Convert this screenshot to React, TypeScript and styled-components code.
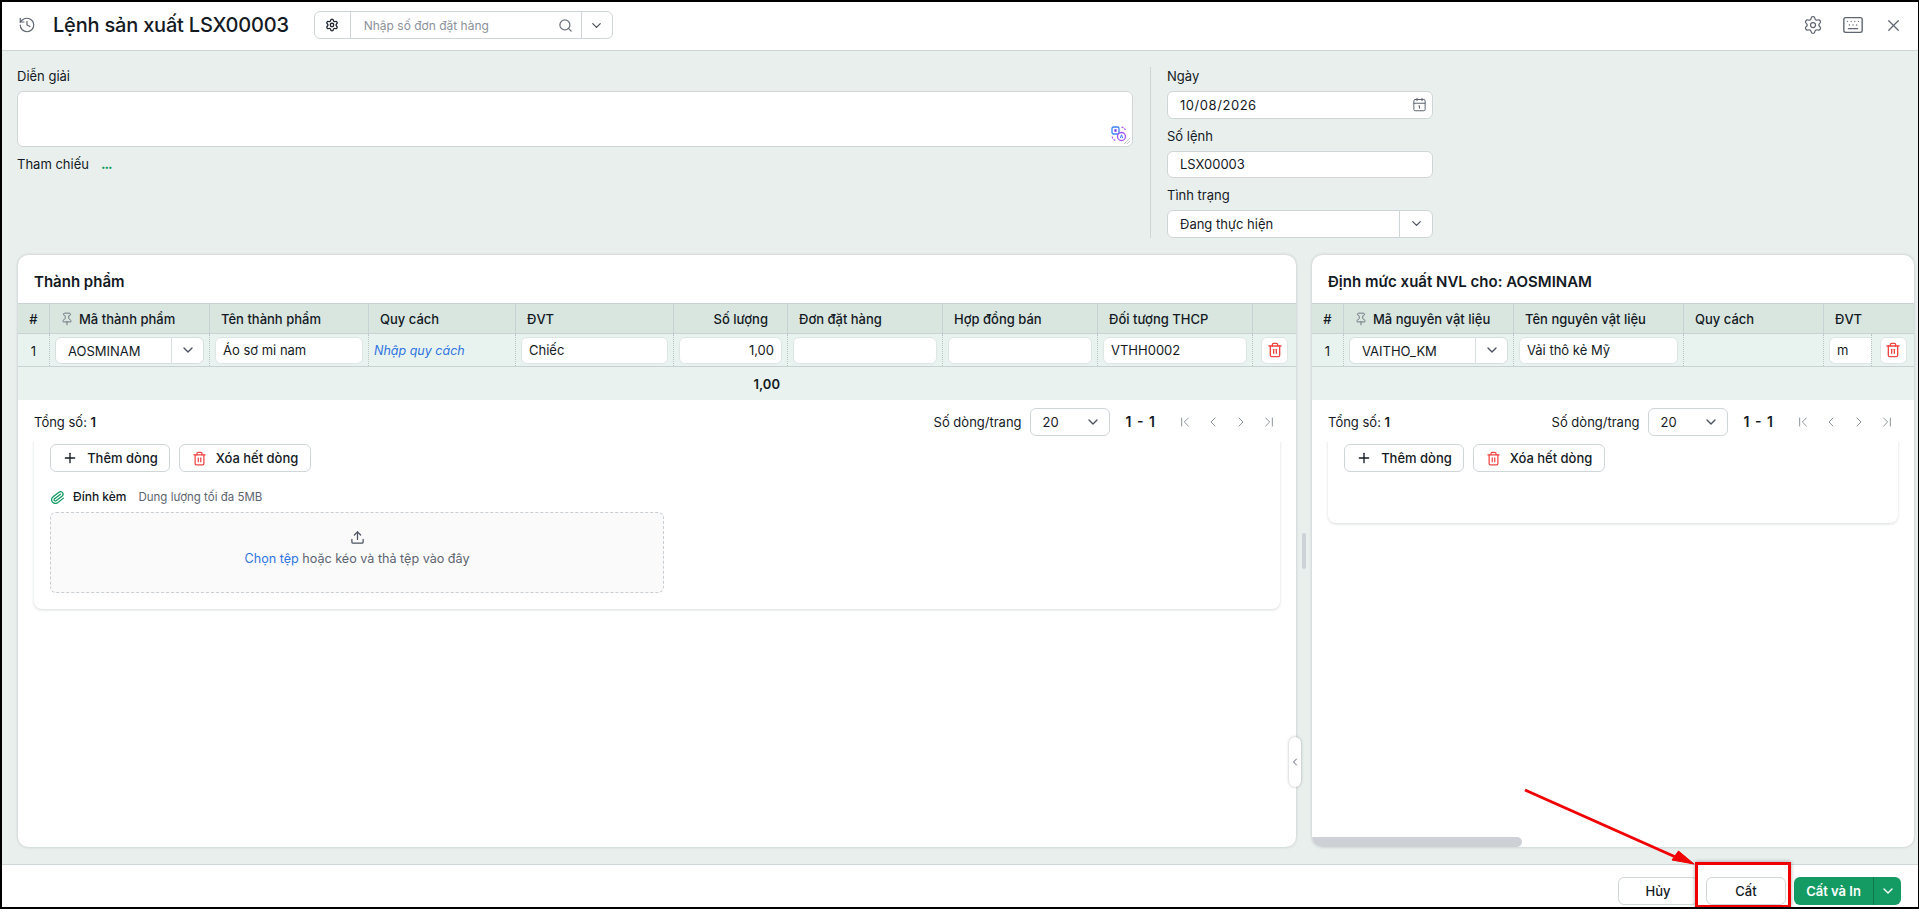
import * as React from 'react'
import styled, { createGlobalStyle } from 'styled-components'
import {
  Calendar1,
  ChevronDown,
  ChevronFirst,
  ChevronLast,
  ChevronLeft,
  ChevronRight,
  History,
  Keyboard,
  Paperclip,
  Pin,
  Plus,
  Search,
  Settings,
  Trash2,
  Upload,
  X,
} from 'lucide-react'

const GlobalStyle = createGlobalStyle`
  html, body {
    margin: 0;
    padding: 0;
    background: #000;
  }
  * {
    box-sizing: border-box;
  }
  body {
    font-family: Inter, 'Noto Sans', sans-serif;
    font-size: 13px;
    color: #141a24;
  }
`

const line = '#d0d5d8'
const tableLine = '#c9d2d2'
const muted = '#5d6470'

const Frame = styled.div`
  position: relative;
  width: 1919px;
  height: 909px;
  border-style: solid;
  border-color: #000;
  border-width: 2px 1px 2px 2px;
  display: flex;
  flex-direction: column;
  background: #e9efed;
  overflow: hidden;
`

const Header = styled.header`
  height: 49px;
  flex: none;
  display: flex;
  align-items: center;
  padding: 0 5px 2px 16px;
  background: #fff;
  border-bottom: 1px solid ${line};
`

const HistoryIcon = styled(History)`
  color: #5f6672;
  margin-right: 17px;
  flex: none;
`

const Title = styled.h1`
  margin: 0 25px 0 0;
  font-size: 20px;
  line-height: 28px;
  font-weight: 500;
  letter-spacing: -0.2px;
  white-space: nowrap;
`

const SearchGroup = styled.div`
  display: flex;
  width: 299px;
  height: 28px;
  background: #fff;
  border: 1px solid ${line};
  border-radius: 6px;
`

const SearchGear = styled.div`
  width: 36px;
  display: flex;
  align-items: center;
  justify-content: center;
  border-right: 1px solid ${line};
  color: #1f2530;
`

const SearchInput = styled.div`
  flex: 1;
  display: flex;
  align-items: center;
  justify-content: space-between;
  padding: 0 8px 0 13px;
  font-size: 12px;
  color: #8b919b;
`

const SearchIcon = styled(Search)`
  color: #6a707b;
`

const SearchArrow = styled.div`
  width: 31px;
  display: flex;
  align-items: center;
  justify-content: center;
  border-left: 1px solid ${line};
  color: #4b5260;
`

const HeaderTools = styled.div`
  margin-left: auto;
  display: flex;
`

const ToolButton = styled.div`
  width: 40px;
  height: 28px;
  display: flex;
  align-items: center;
  justify-content: center;
  color: #5f6672;
`

const Body = styled.main`
  flex: 1;
  min-height: 0;
  display: flex;
  flex-direction: column;
  padding: 16px 4px 17px 16px;
`

const FormRow = styled.section`
  height: 171px;
  flex: none;
  margin-bottom: 17px;
  margin-left: -1px;
  display: flex;
`

const FormMain = styled.div`
  width: 1116px;
`

const FormSide = styled.div`
  width: 283px;
  margin-left: 17px;
  padding-left: 16px;
  border-left: 1px solid #cfd6d6;
  display: flex;
  flex-direction: column;
  gap: 8px;
`

const Label = styled.div`
  height: 18px;
  line-height: 18px;
  font-size: 13px;
  margin-bottom: 6px;
`

const NoteBox = styled.div`
  position: relative;
  height: 56px;
  background: #fff;
  border: 1px solid ${line};
  border-radius: 6px;
`

const NoteTool = styled.svg`
  position: absolute;
  right: 5px;
  bottom: 4px;
`

const NoteGrip = styled.svg`
  position: absolute;
  right: 1px;
  bottom: 1px;
`

const Reference = styled.div`
  margin-top: 8px;
  height: 18px;
  line-height: 18px;
  display: flex;
  gap: 12px;
`

const ReferenceDots = styled.span`
  color: #149a63;
  font-weight: 800;
  font-size: 13px;
  letter-spacing: -1px;
`

const Field = styled.div`
  height: 51.5px;
`

const InputBox = styled.div`
  height: 27.5px;
  display: flex;
  align-items: center;
  background: #fff;
  border: 1px solid ${line};
  border-radius: 6px;
  padding: 0 0 0 12px;
`

const InputValue = styled.span`
  flex: 1;
`

const DateValue = styled(InputValue)`
  letter-spacing: 0.55px;
`

const DateIcon = styled(Calendar1)`
  color: #5f6672;
  margin-right: 5px;
`

const StatusArrow = styled.div`
  width: 33px;
  height: 100%;
  display: flex;
  align-items: center;
  justify-content: center;
  border-left: 1px solid ${line};
  color: #4b5260;
`

const Panels = styled.section`
  flex: 1;
  min-height: 0;
  display: flex;
`

const Card = styled.article<{ $width: number }>`
  width: ${(p) => p.$width}px;
  flex: none;
  display: flex;
  flex-direction: column;
  background: #fff;
  border-radius: 10px;
  box-shadow: 0 0 3px rgba(40, 50, 60, 0.25);
  overflow: hidden;
`

const CardTitle = styled.h2`
  height: 48px;
  flex: none;
  margin: 0;
  padding: 4px 16px 0;
  display: flex;
  align-items: center;
  font-size: 15px;
  font-weight: 600;
`

const HeaderRow = styled.div<{ $cols: string }>`
  display: grid;
  grid-template-columns: ${(p) => p.$cols};
  height: 31px;
  flex: none;
  background: #d9e6e0;
  border-top: 1px solid ${tableLine};
  border-bottom: 1px solid ${tableLine};
`

const HeadCell = styled.div<{ $right?: boolean; $center?: boolean; $span?: number }>`
  grid-column: span ${(p) => p.$span ?? 1};
  display: flex;
  align-items: center;
  justify-content: ${(p) => (p.$center ? 'center' : p.$right ? 'flex-end' : 'flex-start')};
  gap: 5px;
  padding: ${(p) => (p.$center ? '0' : p.$right ? '0 19px 0 0' : '0 0 0 11px')};
  border-right: 1px solid ${tableLine};
  font-weight: 500;
  white-space: nowrap;

  &:last-child {
    border-right: none;
  }
`

const PinIcon = styled(Pin)`
  color: #6a707b;
  margin-left: -1px;
  flex: none;
`

const DataRow = styled.div<{ $cols: string }>`
  display: grid;
  grid-template-columns: ${(p) => p.$cols};
  height: 33px;
  flex: none;
  background: #e8f3ef;
  border-bottom: 1px solid ${tableLine};
`

const DataCell = styled.div<{ $flush?: boolean }>`
  display: flex;
  align-items: center;
  padding: ${(p) => (p.$flush ? '0 0 0 5px' : '0 5px')};
  border-right: 1px dotted #b9c6c4;
  min-width: 0;

  &:last-child {
    border-right: none;
  }
`

const IndexCell = styled(DataCell)`
  justify-content: center;
  padding: 2px 0 0;
`

const ActionCell = styled(DataCell)`
  justify-content: center;
  padding: 0;
`

const QuickLink = styled.span`
  color: #2f74e0;
  font-style: italic;
  font-size: 12.5px;
`

const CellInput = styled.div<{ $right?: boolean; $clipped?: boolean }>`
  width: 100%;
  height: 27px;
  display: flex;
  align-items: center;
  justify-content: ${(p) => (p.$right ? 'flex-end' : 'flex-start')};
  padding: 0 7px;
  background: #fff;
  border: 1px solid #dfe5e5;
  border-radius: ${(p) => (p.$clipped ? '6px 0 0 6px' : '6px')};
  ${(p) => (p.$clipped ? 'border-right: none;' : '')}
`

const CellSelect = styled.div`
  width: 100%;
  height: 27px;
  display: flex;
  align-items: center;
  background: #fff;
  border: 1px solid #d8dee0;
  border-radius: 6px;
  padding-left: 12px;
`

const SelectValue = styled.span`
  flex: 1;
  padding-top: 2px;
`

const CellArrow = styled.div`
  width: 32px;
  height: 100%;
  flex: none;
  display: flex;
  align-items: center;
  justify-content: center;
  border-left: 1px solid #d8dee0;
  color: #4b5260;
`

const DeleteButton = styled.div`
  width: 27px;
  height: 27px;
  display: flex;
  align-items: center;
  justify-content: center;
  background: #fff;
  border: 1px solid #dfe5e5;
  border-radius: 6px;
  color: #ef4444;
`

const TotalRow = styled.div<{ $cols: string }>`
  display: grid;
  grid-template-columns: ${(p) => p.$cols};
  height: 33px;
  flex: none;
  background: #e9f2ee;
`

const TotalValue = styled.div`
  grid-column: 6;
  display: flex;
  align-items: center;
  justify-content: flex-end;
  padding-right: 8px;
  font-weight: 600;
`

const Pager = styled.div`
  height: 36px;
  flex: none;
  padding: 8px 13px 0 16px;
  display: flex;
  align-items: center;
  line-height: 28px;
`

const PagerTotal = styled.div`
  margin-right: auto;

  b {
    font-weight: 600;
  }
`

const PageSize = styled.div`
  width: 80px;
  height: 28px;
  margin: 0 16px 0 8px;
  padding: 0 8px 0 12px;
  display: flex;
  align-items: center;
  justify-content: space-between;
  border: 1px solid ${line};
  border-radius: 6px;
  color: #141a24;

  svg {
    color: #4b5260;
  }
`

const PageRange = styled.div`
  font-weight: 600;
  font-size: 14px;
  margin-right: 16px;
  word-spacing: 2px;
`

const PageNav = styled.div`
  width: 28px;
  display: flex;
  justify-content: center;
  color: #8d939d;
`

const Lines = styled.div<{ $height: number }>`
  height: ${(p) => p.$height}px;
  flex: none;
  margin: 0 16px;
  padding: 8px 16px;
  background: #fff;
  border-radius: 0 0 8px 8px;
  box-shadow: 0 1px 3px rgba(40, 50, 60, 0.18);
  clip-path: inset(6px -5px -5px -5px);
`

const ButtonRow = styled.div`
  display: flex;
  gap: 9px;
`

const OutlineButton = styled.div<{ $width: number }>`
  width: ${(p) => p.$width}px;
  height: 28px;
  display: flex;
  align-items: center;
  justify-content: center;
  gap: 9px;
  background: #fff;
  border: 1px solid ${line};
  border-radius: 6px;
  font-weight: 500;
  white-space: nowrap;
`

const RedTrash = styled(Trash2)`
  color: #ef4444;
`

const AttachRow = styled.div`
  height: 18px;
  margin-top: 16px;
  margin-bottom: 6px;
  display: flex;
  align-items: center;
  font-size: 12px;
  line-height: 18px;
`

const AttachIcon = styled(Paperclip)`
  color: #149a63;
  margin-right: 8px;
  transform: rotate(8deg);
`

const AttachName = styled.span`
  font-weight: 500;
  font-size: 12px;
  margin-right: 12px;
`

const AttachHint = styled.span`
  color: ${muted};
  font-size: 11.5px;
`

const Dropzone = styled.div`
  width: 614px;
  height: 81px;
  display: flex;
  flex-direction: column;
  align-items: center;
  justify-content: center;
  gap: 6px;
  background: #fafafa;
  border: 1px dashed #c9ced3;
  border-radius: 6px;
  color: ${muted};
  font-size: 12.6px;
  padding-bottom: 9px;

  svg {
    color: #4b5260;
  }
`

const DropLink = styled.span`
  color: #2f74e0;
`

const ScrollBar = styled.div`
  margin-top: auto;
  width: 210px;
  height: 10px;
  flex: none;
  background: #cdd0d5;
  border-radius: 0 6px 6px 6px;
`

const Splitter = styled.div`
  position: relative;
  width: 16px;
  flex: none;
  display: flex;
  align-items: center;
  justify-content: center;
`

const SplitHandle = styled.div`
  width: 4px;
  height: 36px;
  margin-left: -1px;
  background: #cdd2d6;
  border-radius: 2px;
`

const CollapseTab = styled.div`
  position: absolute;
  left: -7px;
  top: 482px;
  width: 12px;
  height: 50px;
  display: flex;
  align-items: center;
  justify-content: center;
  background: #fff;
  border-radius: 6px;
  box-shadow: 0 0 3px rgba(40, 50, 60, 0.35);
  color: #5f6672;
`

const Footer = styled.footer`
  height: 43px;
  flex: none;
  display: flex;
  justify-content: flex-end;
  gap: 8px;
  padding: 12px 17px 0 0;
  background: #fff;
  border-top: 1px solid ${line};
`

const PlainButton = styled.div`
  width: 80px;
  height: 28px;
  display: flex;
  align-items: center;
  justify-content: center;
  background: #fff;
  border: 1px solid ${line};
  border-radius: 6px;
  font-weight: 500;
`

const PrimaryGroup = styled.div`
  display: flex;
  height: 28px;
  width: 107px;
  background: #149a63;
  border-radius: 6px;
  color: #fff;
  font-weight: 600;
`

const PrimaryLabel = styled.div`
  width: 79px;
  display: flex;
  align-items: center;
  justify-content: center;
`

const PrimaryArrow = styled.div`
  flex: 1;
  display: flex;
  align-items: center;
  justify-content: center;
  border-left: 1px solid #0f7a4e;
`

// annotation drawn over the screenshot: arrow and red frame round the save button
const Annotation = styled.svg`
  position: absolute;
  left: -2px;
  top: -2px;
  pointer-events: none;
`

const MarkBox = styled.div`
  position: absolute;
  left: 1693px;
  top: 860px;
  width: 96px;
  height: 46px;
  border: 3px solid #f00000;
  box-shadow: 0 0 4px rgba(0, 0, 0, 0.35);
  pointer-events: none;
`

const leftCols = '32px 160px 159px 147px 158px 114px 155px 155px 155px 43px'
const rightCols = '32px 170px 170px 140px 48px 42px'

const TablePager = () => (
  <Pager>
    <PagerTotal>
      Tổng số: <b>1</b>
    </PagerTotal>
    <span>Số dòng/trang</span>
    <PageSize>
      20
      <ChevronDown size={16} />
    </PageSize>
    <PageRange>1 - 1</PageRange>
    <PageNav>
      <ChevronFirst size={16} strokeWidth={1.5} />
    </PageNav>
    <PageNav>
      <ChevronLeft size={16} strokeWidth={1.5} />
    </PageNav>
    <PageNav>
      <ChevronRight size={16} strokeWidth={1.5} />
    </PageNav>
    <PageNav>
      <ChevronLast size={16} strokeWidth={1.5} />
    </PageNav>
  </Pager>
)

const LineButtons = () => (
  <ButtonRow>
    <OutlineButton $width={120}>
      <Plus size={16} />
      Thêm dòng
    </OutlineButton>
    <OutlineButton $width={132}>
      <RedTrash size={15} />
      Xóa hết dòng
    </OutlineButton>
  </ButtonRow>
)

const SelectCell = ({ value }: { value: string }) => (
  <DataCell>
    <CellSelect>
      <SelectValue>{value}</SelectValue>
      <CellArrow>
        <ChevronDown size={16} />
      </CellArrow>
    </CellSelect>
  </DataCell>
)

const TextCell = ({ value, right }: { value?: string; right?: boolean }) => (
  <DataCell>
    <CellInput $right={right}>{value}</CellInput>
  </DataCell>
)

const DeleteCell = () => (
  <ActionCell>
    <DeleteButton>
      <Trash2 size={16} />
    </DeleteButton>
  </ActionCell>
)

const App = () => {
  return (
    <Frame>
      <GlobalStyle />
      <Header>
        <HistoryIcon size={18} strokeWidth={1.6} />
        <Title>Lệnh sản xuất LSX00003</Title>
        <SearchGroup>
          <SearchGear>
            <Settings size={14} strokeWidth={2.2} />
          </SearchGear>
          <SearchInput>
            Nhập số đơn đặt hàng
            <SearchIcon size={15} />
          </SearchInput>
          <SearchArrow>
            <ChevronDown size={15} />
          </SearchArrow>
        </SearchGroup>
        <HeaderTools>
          <ToolButton>
            <Settings size={20} strokeWidth={1.5} />
          </ToolButton>
          <ToolButton>
            <Keyboard size={22} strokeWidth={1.5} />
          </ToolButton>
          <ToolButton>
            <X size={19} strokeWidth={1.5} />
          </ToolButton>
        </HeaderTools>
      </Header>

      <Body>
        <FormRow>
          <FormMain>
            <Label>Diễn giải</Label>
            <NoteBox>
              <NoteTool width="16" height="16" viewBox="0 0 16 16" fill="none">
                <rect x="1" y="1" width="7" height="7" rx="1.5" stroke="#3b82f6" strokeWidth="1.3" />
                <rect x="3.4" y="3.2" width="2.2" height="2.6" fill="#7c3aed" />
                <circle cx="10.5" cy="10.5" r="4" stroke="#a855f7" strokeWidth="1.3" />
                <path d="M9.2 12.2l1.3-3.4 1.3 3.4" stroke="#3b82f6" strokeWidth="1" />
                <path d="M10.5 1.2c2 0 3.6 1.4 3.9 3.3M1.2 10.5c.2 2 1.6 3.6 3.4 3.9" stroke="#a855f7" strokeWidth="1.2" strokeDasharray="2 1.2" />
              </NoteTool>
              <NoteGrip width="8" height="8" viewBox="0 0 8 8">
                <path d="M1 7l6-6M4 7l3-3" stroke="#c5cacf" strokeWidth="1" />
              </NoteGrip>
            </NoteBox>
            <Reference>
              Tham chiếu
              <ReferenceDots>...</ReferenceDots>
            </Reference>
          </FormMain>
          <FormSide>
            <Field>
              <Label>Ngày</Label>
              <InputBox>
                <DateValue>10/08/2026</DateValue>
                <DateIcon size={15} strokeWidth={1.6} />
              </InputBox>
            </Field>
            <Field>
              <Label>Số lệnh</Label>
              <InputBox>
                <InputValue>LSX00003</InputValue>
              </InputBox>
            </Field>
            <Field>
              <Label>Tình trạng</Label>
              <InputBox>
                <InputValue>Đang thực hiện</InputValue>
                <StatusArrow>
                  <ChevronDown size={15} />
                </StatusArrow>
              </InputBox>
            </Field>
          </FormSide>
        </FormRow>

        <Panels>
          <Card $width={1278}>
            <CardTitle>Thành phẩm</CardTitle>
            <HeaderRow $cols={leftCols}>
              <HeadCell $center>#</HeadCell>
              <HeadCell>
                <PinIcon size={14} strokeWidth={1.6} />
                Mã thành phẩm
              </HeadCell>
              <HeadCell>Tên thành phẩm</HeadCell>
              <HeadCell>Quy cách</HeadCell>
              <HeadCell>ĐVT</HeadCell>
              <HeadCell $right>Số lượng</HeadCell>
              <HeadCell>Đơn đặt hàng</HeadCell>
              <HeadCell>Hợp đồng bán</HeadCell>
              <HeadCell>Đối tượng THCP</HeadCell>
              <HeadCell />
            </HeaderRow>
            <DataRow $cols={leftCols}>
              <IndexCell>1</IndexCell>
              <SelectCell value="AOSMINAM" />
              <TextCell value="Áo sơ mi nam" />
              <DataCell>
                <QuickLink>Nhập quy cách</QuickLink>
              </DataCell>
              <TextCell value="Chiếc" />
              <TextCell value="1,00" right />
              <TextCell />
              <TextCell />
              <TextCell value="VTHH0002" />
              <DeleteCell />
            </DataRow>
            <TotalRow $cols={leftCols}>
              <TotalValue>1,00</TotalValue>
            </TotalRow>
            <TablePager />
            <Lines $height={173}>
              <LineButtons />
              <AttachRow>
                <AttachIcon size={15} strokeWidth={2} />
                <AttachName>Đính kèm</AttachName>
                <AttachHint>Dung lượng tối đa 5MB</AttachHint>
              </AttachRow>
              <Dropzone>
                <Upload size={15} />
                <div>
                  <DropLink>Chọn tệp</DropLink> hoặc kéo và thả tệp vào đây
                </div>
              </Dropzone>
            </Lines>
          </Card>

          <Splitter>
            <SplitHandle />
            <CollapseTab>
              <ChevronLeft size={16} />
            </CollapseTab>
          </Splitter>

          <Card $width={602}>
            <CardTitle>Định mức xuất NVL cho: AOSMINAM</CardTitle>
            <HeaderRow $cols={rightCols}>
              <HeadCell $center>#</HeadCell>
              <HeadCell>
                <PinIcon size={14} strokeWidth={1.6} />
                Mã nguyên vật liệu
              </HeadCell>
              <HeadCell>Tên nguyên vật liệu</HeadCell>
              <HeadCell>Quy cách</HeadCell>
              <HeadCell $span={2}>ĐVT</HeadCell>
            </HeaderRow>
            <DataRow $cols={rightCols}>
              <IndexCell>1</IndexCell>
              <SelectCell value="VAITHO_KM" />
              <TextCell value="Vải thô kẻ Mỹ" />
              <DataCell />
              <DataCell $flush>
                <CellInput $clipped>m</CellInput>
              </DataCell>
              <DeleteCell />
            </DataRow>
            <TotalRow $cols={rightCols} />
            <TablePager />
            <Lines $height={87}>
              <LineButtons />
            </Lines>
            <ScrollBar />
          </Card>
        </Panels>
      </Body>

      <Footer>
        <PlainButton>Hủy</PlainButton>
        <PlainButton>Cất</PlainButton>
        <PrimaryGroup>
          <PrimaryLabel>Cất và In</PrimaryLabel>
          <PrimaryArrow>
            <ChevronDown size={16} />
          </PrimaryArrow>
        </PrimaryGroup>
      </Footer>

      <Annotation width="1919" height="909" viewBox="0 0 1919 909" fill="none">
        <path d="M1525 790L1680 859" stroke="#f00000" strokeWidth="3" />
        <path d="M1694 864L1672 860L1678.5 851Z" fill="#f00000" stroke="#f00000" strokeWidth="1" />
      </Annotation>
      <MarkBox />
    </Frame>
  )
}

export default App
